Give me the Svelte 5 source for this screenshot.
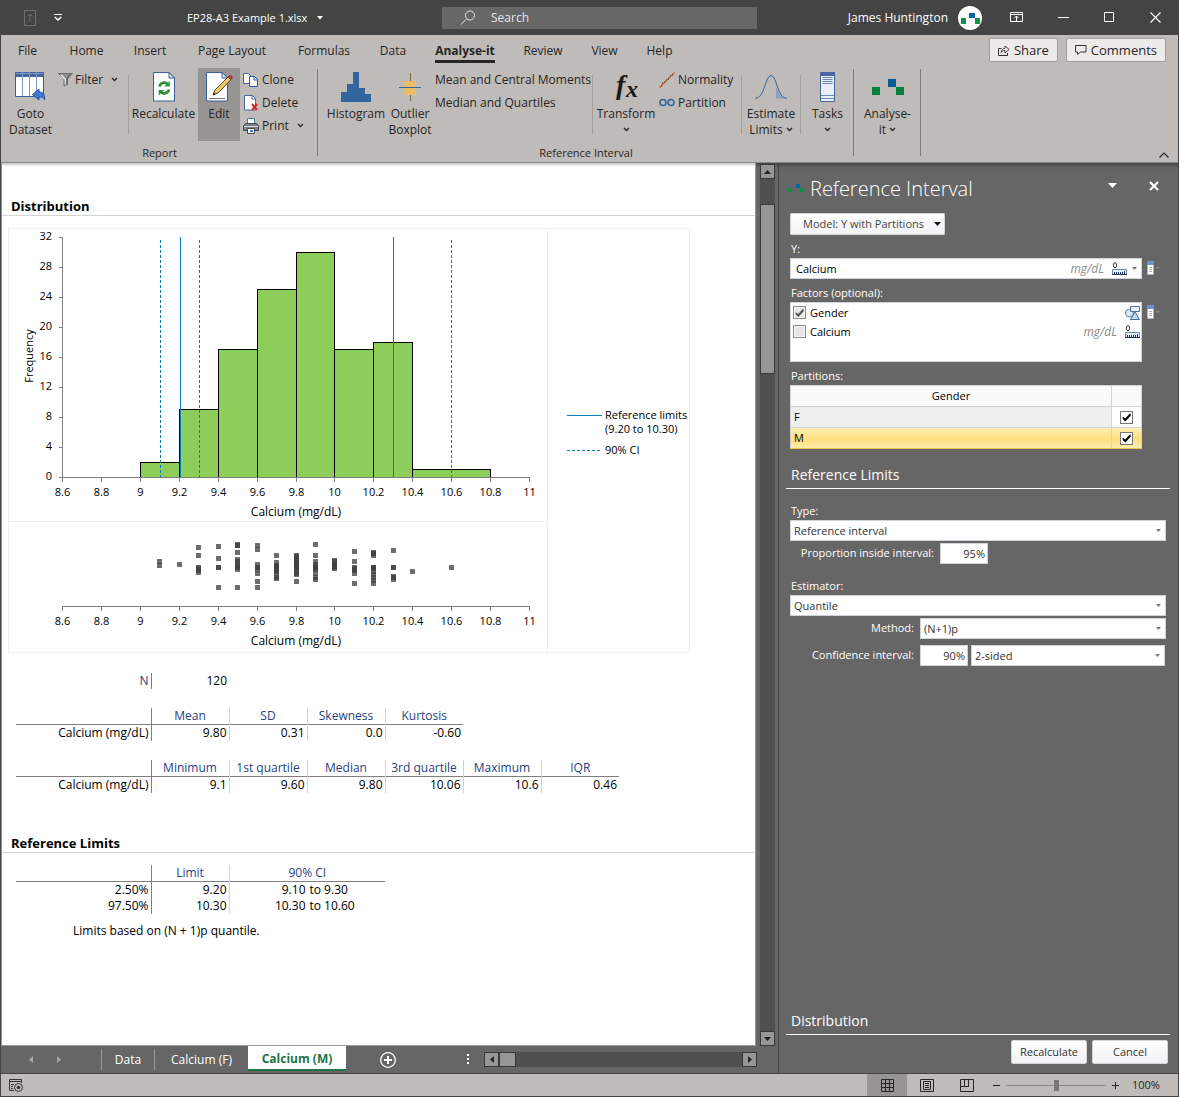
<script>
  const tabs = ['File', 'Home', 'Insert', 'Page Layout', 'Formulas', 'Data', 'Analyse-it', 'Review', 'View', 'Help'];

  const x0 = 54;
  const xTicks = ['8.6', '8.8', '9', '9.2', '9.4', '9.6', '9.8', '10', '10.2', '10.4', '10.6', '10.8', '11'];
  const yTicks = [0, 4, 8, 12, 16, 20, 24, 28, 32];
  const xAt = (v) => Math.round(x0 + ((v - 8.6) / 2.4) * 467 + 0.01) + 0.5;
  const yAt = (v) => Math.floor(249 - v * 7.5) + 0.5;
  const bars = [[9, 2], [9.2, 9], [9.4, 17], [9.6, 25], [9.8, 30], [10, 17], [10.2, 18]];

  const dots = [
    [9.1, [333, 337]],
    [9.2, [336]],
    [9.3, [319, 327, 339, 340, 342, 344]],
    [9.4, [318, 330, 339, 339, 359]],
    [9.5, [316, 317, 317, 324, 331, 333, 336, 338, 339, 341, 359]],
    [9.6, [317, 321, 336, 339, 339, 341, 345, 353, 359]],
    [9.7, [327, 334, 337, 338, 339, 340, 341, 343, 345, 349, 350]],
    [9.8, [327, 328, 329, 331, 332, 334, 335, 337, 338, 339, 341, 343, 345, 346, 353]],
    [9.9, [316, 327, 333, 336, 338, 339, 340, 341, 345, 349, 351]],
    [10, [332, 333, 335, 336, 338, 339, 340]],
    [10.1, [323, 333, 339, 340, 341, 342, 345, 355]],
    [10.2, [324, 325, 325, 327, 339, 339, 340, 343, 346, 349, 352, 355]],
    [10.3, [322, 339, 339, 348, 349, 351]],
    [10.4, [343]],
    [10.6, [339]]
  ];

  const summaries = [
    { heads: ['Mean', 'SD', 'Skewness', 'Kurtosis'], values: ['9.80', '0.31', '0.0', '-0.60'] },
    {
      heads: ['Minimum', '1st quartile', 'Median', '3rd quartile', 'Maximum', 'IQR'],
      values: ['9.1', '9.60', '9.80', '10.06', '10.6', '0.46']
    }
  ];
</script>

{#snippet chevron()}
  <svg class="chev" width="7" height="5" viewBox="0 0 7 5"><path d="M1 1l2.5 2.5L6 1" fill="none" stroke="#262626" stroke-width="1.3" /></svg>
{/snippet}

{#snippet caret()}
  <svg class="caret" width="5" height="3" viewBox="0 0 5 3"><path d="M0 0h5L2.5 3z" fill="#777" /></svg>
{/snippet}

{#snippet ruler()}
  <svg width="15" height="13" viewBox="0 0 15 13">
    <ellipse cx="3" cy="3.2" rx="1.6" ry="2.600" fill="none" stroke="#333" />
    <path d="M.5 7.500h14v5H.5z" fill="#e8effa" stroke="#6c8bb8" />
    <path d="M0 12.500h15" stroke="#1f355e" />
    <path d="M2.500 10v2M4.500 10v2M6.500 10v2M8.500 10v2M10.500 10v2M12.500 9v3" stroke="#1f355e" />
  </svg>
{/snippet}

{#snippet taskIcon()}
  <svg width="14" height="14" viewBox="0 0 14 14">
    <path d="M.5 1.500h6v12h-6z" fill="#fff" stroke="#9fb4d6" />
    <path d="M0 0h7v4H0z" fill="#6f93d1" />
    <path d="M2 6.500h3M2 8.500h3M2 10.500h3" stroke="#a8b0bb" />
    <path d="M9 6h4l-2 2.500z" fill="#8a8a8a" />
  </svg>
{/snippet}

{#snippet xAxis(y)}
  <path d="M{x0} {y}.5h468" stroke="#7f7f7f" fill="none" />
  {#each xTicks as t, i}
    <path d="M{xAt(8.6 + i * 0.2)} {y}v5" stroke="#7f7f7f" />
    <text x={xAt(8.6 + i * 0.2)} y={y + 19} text-anchor="middle">{t}</text>
  {/each}
  <text x="288" y={y + 39} text-anchor="middle" class="axis">Calcium (mg/dL)</text>
{/snippet}

<div class="app">
  <header class="titlebar">
    <div class="tb-left">
      <button class="bare quick" aria-label="Touch mode">
        <svg width="12" height="16" viewBox="0 0 12 16"><path d="M.5.5h11v15H.5zM6 12V4M3.500 6.500L6 4l2.500 2.500" fill="none" stroke="#6f6f6f" /></svg>
      </button>
      <button class="bare more" aria-label="Customize toolbar">
        <svg width="8" height="7" viewBox="0 0 8 7"><path d="M0 .5h8" stroke="#fff" /><path d="M.8 3L4 6l3.200-3" fill="none" stroke="#fff" stroke-width="1.500" /></svg>
      </button>
      <button class="bare doc">EP28-A3 Example 1.xlsx <svg width="6" height="4" viewBox="0 0 6 4"><path d="M0 0h6L3 3.500z" fill="#fff" /></svg></button>
    </div>
    <label class="search">
      <svg width="16" height="16" viewBox="0 0 16 16"><circle cx="10" cy="5.500" r="4.500" fill="none" stroke="#e6e6e6" /><path d="M6.500 9L1 14.500" stroke="#e6e6e6" /></svg>
      <input type="text" placeholder="Search" aria-label="Search" />
    </label>
    <div class="tb-right">
      <span class="user">James Huntington</span>
      <svg class="avatar" width="24" height="24" viewBox="0 0 24 24"><circle cx="12" cy="12" r="12" fill="#fff" /><path d="M11 7h6v5h-6z" fill="#0068a5" /><path d="M3 12h5v6H3zM17 12h5v6h-5z" fill="#0b9444" /></svg>
      <button class="bare win" aria-label="Ribbon display"><svg width="14" height="11" viewBox="0 0 14 11"><path d="M.5.5h12v9H.5zM.500 2.500h12M6.500 9V4M4.500 6l2-2 2 2" fill="none" stroke="#fff" /></svg></button>
      <button class="bare win" aria-label="Minimize"><svg width="11" height="11" viewBox="0 0 11 11"><path d="M0 5.500h11" stroke="#fff" /></svg></button>
      <button class="bare win" aria-label="Maximize"><svg width="11" height="11" viewBox="0 0 11 11"><path d="M.5.5h9v9h-9z" fill="none" stroke="#fff" /></svg></button>
      <button class="bare win" aria-label="Close"><svg width="11" height="11" viewBox="0 0 11 11"><path d="M.5.5l10 10M10.500.5l-10 10" stroke="#fff" stroke-width="1.200" /></svg></button>
    </div>
  </header>

  <section class="ribbon">
    <div class="tabrow">
      <nav class="tabs">
        {#each tabs as t}
          <button class="bare tab" class:on={t === 'Analyse-it'}><span>{t}</span></button>
        {/each}
      </nav>
      <div class="share">
        <button>
          <svg width="12" height="12" viewBox="0 0 12 12"><path d="M3.500 4.500h-3v7h9V9" fill="none" stroke="#333" /><path d="M3 8.500c.5-3 2-4 4-4.200V2l4.200 3.500L7 9V6.500C5.500 6.500 4 7 3 8.500z" fill="none" stroke="#333" stroke-width=".9" /></svg>Share</button>
        <button>
          <svg width="12" height="12" viewBox="0 0 12 12"><path d="M.5 1.500h10.500v6.500H5.500l-3 2.500V8h-2z" fill="none" stroke="#333" /></svg>Comments</button>
      </div>
    </div>

    <div class="groups">
      <div class="group">
        <div class="items">
          <button class="big w57 goto">
            <svg width="31" height="30" viewBox="0 0 31 30">
              <path d="M.5.5h28v24H.5z" fill="#fff" stroke="#385c96" />
              <path d="M0 0h29v5H0z" fill="#46659e" /><path d="M1 1.500h27" stroke="#7e98c6" />
              <path d="M7.500 0v24M14.500 0v24M21.500 0v24" stroke="#7b9ac9" />
              <path d="M17.500 22.500l6.500-5.500v3c5 0 6 3 5.500 8-1-3-2.500-3-5.500-3v3z" fill="#3f7bd6" stroke="#2456a8" />
            </svg>
            <span>Goto<br />Dataset</span>
          </button>
          <div class="list w70 filter">
            <button class="small"><svg width="16" height="16" viewBox="0 0 16 16"><path d="M.5 1.500h14L9.500 7v5.500L6 14V7z" fill="#8d8d8d" stroke="#6c6c6c" /><path d="M3 3l4.500 4.500v5" fill="none" stroke="#eee" stroke-width="1.500" /><path d="M12 2.500L8.700 6.500V12" fill="none" stroke="#555" /></svg>Filter<span class="push">{@render chevron()}</span></button>
          </div>
          <i class="sep"></i>
          <button class="big w69">
            <svg width="30" height="30" viewBox="0 0 30 30">
              <path d="M4.500.5H20l5.500 5.500v23h-21z" fill="#fafcff" stroke="#3f5f94" /><path d="M20 .5V6h5.500z" fill="#dce7f5" stroke="#3f5f94" />
              <path d="M10.500 14.500c.8-4 6-5 8-2.500M20 17.500c-.8 4-6 5-8 2.500" fill="none" stroke="#2b8f2b" stroke-width="2.600" />
              <path d="M20.800 9v5.500h-5.500zM9.700 23.500V18h5.500z" fill="#2b9a2b" />
            </svg>
            <span>Recalculate</span>
          </button>
          <button class="big w42 pressed">
            <svg width="30" height="30" viewBox="0 0 30 30">
              <path d="M2.500.5H18l5.500 5.500v23h-21z" fill="#fafcff" stroke="#3f5f94" /><path d="M18 .5V6h5.500z" fill="#dce7f5" stroke="#3f5f94" />
              <path d="M5 26.500h16" stroke="#777" />
              <path d="M9 23l2-5L24 5l3 2.500L14 21z" fill="#f3cb62" stroke="#3f3320" stroke-width=".9" />
              <path d="M24 5l1.500-1.500c2-.5 3 1 2.500 2.800L27 7.500z" fill="#d9373a" stroke="#7b2226" stroke-width=".6" />
              <path d="M9 23l1-2.500 1.500 1.500z" fill="#222" />
            </svg>
            <span>Edit</span>
          </button>
          <div class="list w78 docs">
            <button class="small"><svg width="16" height="16" viewBox="0 0 16 16"><path d="M.5 1.500h5l3 3v7h-8z" fill="#fff" stroke="#3c66ad" /><path d="M6.500 4.500h5l3 3v7h-8z" fill="#fff" stroke="#2459ad" /><path d="M11 4.500V8h3.500" fill="none" stroke="#2459ad" /></svg>Clone</button>
            <button class="small"><svg width="16" height="16" viewBox="0 0 16 16"><path d="M1.500.5h8l3 3v11.500h-11z" fill="#fff" stroke="#4a689c" /><path d="M9 .5V4h3.500" fill="none" stroke="#4a689c" /><path d="M9 9l5 6M14 9l-5 6" stroke="#cf2a1b" stroke-width="2" /></svg>Delete</button>
            <button class="small"><svg width="16" height="16" viewBox="0 0 16 16"><path d="M4.500.5h7v6h-7z" fill="#fff" stroke="#56729e" /><path d="M2.500 5.500h11l2 2.500v4.500H.5V8z" fill="#7f8288" stroke="#44474d" /><path d="M1 8.500h14" stroke="#d5d7da" /><path d="M4.500 10.500h7v5h-7z" fill="#fff" stroke="#44474d" /><path d="M7 12h3v2H7z" fill="#2f7fd0" /></svg>Print<span class="push">{@render chevron()}</span></button>
          </div>
        </div>
        <div class="caption">Report</div>
      </div>

      <div class="group">
        <div class="items">
          <button class="big w76">
            <svg width="30" height="30" viewBox="0 0 30 30" shape-rendering="crispEdges"><path d="M0 30V20h6v-8h6V0h6v16h6v6h6v8z" fill="#31659c" /></svg>
            <span>Histogram</span>
          </button>
          <button class="big w32">
            <svg width="22" height="30" viewBox="0 0 22 30"><path d="M11.500 1v28" stroke="#7d684a" /><path d="M5 9h12v14H5z" fill="#e9bd69" /><path d="M0 15.500h22" stroke="#31659c" /></svg>
            <span>Outlier<br />Boxplot</span>
          </button>
          <div class="list w166 plain">
            <button class="small">Mean and Central Moments</button>
            <button class="small">Median and Quartiles</button>
          </div>
          <i class="sep"></i>
          <button class="big w66">
            <svg class="fx" width="30" height="30" viewBox="0 0 30 30"><text x="5" y="22">f</text><text x="15" y="25" class="sub">x</text></svg>
            <span>Transform<br />{@render chevron()}</span>
          </button>
          <div class="list w82">
            <button class="small"><svg width="16" height="16" viewBox="0 0 16 16"><path d="M.5 15.500L15.500.5" stroke="#e2552f" stroke-width="1.200" /><path d="M3 11h1M5 10h1M7 8h1M9 7h1M11 4h1M13 3h1M2 14h1" stroke="#333" stroke-width="1.200" /></svg>Normality</button>
            <button class="small"><svg width="16" height="16" viewBox="0 0 16 16"><circle cx="4" cy="7.500" r="3" fill="none" stroke="#31659c" stroke-width="1.600" /><circle cx="12" cy="7.500" r="3" fill="none" stroke="#31659c" stroke-width="1.600" /></svg>Partition</button>
          </div>
          <i class="sep"></i>
          <button class="big w58">
            <svg width="32" height="30" viewBox="0 0 32 30"><path d="M21 15c3 6 5 11 10 11.500H21z" fill="#8ba3bd" /><path d="M0 26.500c10 0 10-23 16-23s6 23 16 23" fill="none" stroke="#31659c" /></svg>
            <span>Estimate<br />Limits {@render chevron()}</span>
          </button>
          <i class="sep"></i>
          <button class="big w53">
            <svg width="16" height="30" viewBox="0 0 16 30"><path d="M.5.5h14v29H.5z" fill="#eaf0f9" stroke="#45659c" /><path d="M0 0h15v4H0z" fill="#4b68a4" /><path d="M2.500 5.500h10M2.500 7.500h10M2.500 9.500h10M2.500 11.500h10M1 23.500h13M1 26.500h13" stroke="#6d87b4" /></svg>
            <span>Tasks<br />{@render chevron()}</span>
          </button>
        </div>
        <div class="caption">Reference Interval</div>
      </div>

      <div class="group">
        <div class="items">
          <button class="big w67">
            <svg width="32" height="30" viewBox="0 0 32 30" shape-rendering="crispEdges"><path d="M16 7h8v8h-8z" fill="#005b96" /><path d="M0 15h8v8H0zM24 15h8v8h-8z" fill="#007f3b" /></svg>
            <span>Analyse-<br />it {@render chevron()}</span>
          </button>
        </div>
      </div>
      <button class="bare collapse" aria-label="Collapse ribbon"><svg width="10" height="6" viewBox="0 0 10 6"><path d="M.5 5.500L5 1l4.500 4.500" fill="none" stroke="#222" stroke-width="1.200" /></svg></button>
    </div>
  </section>

  <main class="work">
    <div class="book">
      <div class="sheetrow">
        <article class="sheet">
          <h2>Distribution</h2>
          <svg class="chart" width="682" height="426" viewBox="0 0 682 426">
            <path d="M.5.5h681v424H.5zM539.500.5v424M.5 293.500h539" fill="none" stroke="#efefef" />
            <g shape-rendering="crispEdges">
              {#each bars as [v, n]}
                <rect x={xAt(v)} y={yAt(n)} width={xAt(v + 0.2) - xAt(v)} height={249.5 - yAt(n)} fill="#8dce5b" stroke="#000" />
              {/each}
              <rect x={xAt(10.4)} y={yAt(1)} width={xAt(10.8) - xAt(10.4)} height={249.5 - yAt(1)} fill="#8dce5b" stroke="#000" />
            </g>
            <path d="M54.500 9v241" stroke="#7f7f7f" />
            {#each yTicks as t}
              <path d="M51 {249.5 - t * 7.5}h4" stroke="#7f7f7f" />
              <text x="44" y={252 - t * 7.5} text-anchor="end">{t}</text>
            {/each}
            <text transform="translate(25 128) rotate(-90)" text-anchor="middle">Frequency</text>
            {@render xAxis(249)}
            <g stroke="#0a7fc0" fill="none">
              <path d="M172.500 9v240M385.500 9v240" />
              <path d="M152.500 12v237M191.500 12v237M443.500 12v237" stroke-dasharray="3 2" />
              <path d="M559 187.500h35" /><path d="M559 222.500h35" stroke-dasharray="3 2" />
            </g>
            <text x="597" y="191">Reference limits</text>
            <text x="597" y="205">(9.20 to 10.30)</text>
            <text x="597" y="226">90% CI</text>
            {@render xAxis(378)}
            <g fill="#404040" fill-opacity=".76" shape-rendering="crispEdges">
              {#each dots as [v, ys]}
                {#each ys as y}
                  <rect x={xAt(v) - 2.5} y={y - 2} width="5" height="5" />
                {/each}
              {/each}
            </g>
          </svg>

          <table class="stat">
            <tbody><tr><th class="row blue" scope="row">N</th><td>120</td></tr></tbody>
          </table>
          {#each summaries as s}
            <table class="stat summary">
              <thead><tr><td class="row"></td>{#each s.heads as h}<th scope="col">{h}</th>{/each}</tr></thead>
              <tbody><tr><th class="row" scope="row">Calcium (mg/dL)</th>{#each s.values as v}<td>{v}</td>{/each}</tr></tbody>
            </table>
          {/each}

          <h2 class="second">Reference Limits</h2>
          <table class="stat limits">
            <thead><tr><td class="row"></td><th scope="col">Limit</th><th class="ci" scope="col">90% CI</th></tr></thead>
            <tbody>
              <tr><th class="row" scope="row">2.50%</th><td>9.20</td><td class="ci"><span class="lo">9.10</span><span>to 9.30</span></td></tr>
              <tr><th class="row" scope="row">97.50%</th><td>10.30</td><td class="ci"><span class="lo">10.30</span><span>to 10.60</span></td></tr>
            </tbody>
          </table>
          <p class="note">Limits based on (N + 1)p quantile.</p>
        </article>
        <div class="vbar">
          <button class="sb" aria-label="Scroll up"><svg width="7" height="4" viewBox="0 0 7 4"><path d="M0 4h7L3.500 0z" fill="#222" /></svg></button>
          <div class="vthumb"></div>
          <button class="sb" aria-label="Scroll down"><svg width="7" height="4" viewBox="0 0 7 4"><path d="M0 0h7L3.500 4z" fill="#222" /></svg></button>
        </div>
      </div>
      <div class="sheettabs">
        <button class="bare arrow" aria-label="Previous sheet"><svg width="4" height="7" viewBox="0 0 4 7"><path d="M4 0v7L0 3.500z" fill="#a8a8a8" /></svg></button>
        <button class="bare arrow" aria-label="Next sheet"><svg width="4" height="7" viewBox="0 0 4 7"><path d="M0 0v7l4-3.500z" fill="#a8a8a8" /></svg></button>
        <div class="pages">
          <button class="bare page data">Data</button>
          <button class="bare page">Calcium (F)</button>
          <button class="bare page on">Calcium (M)</button>
        </div>
        <button class="bare add" aria-label="New sheet"><svg width="16" height="16" viewBox="0 0 16 16"><circle cx="8" cy="8" r="7.300" fill="none" stroke="#fff" stroke-width="1.300" /><path d="M8 4v8M4 8h8" stroke="#fff" stroke-width="2" /></svg></button>
        <svg class="grip" width="2" height="11" viewBox="0 0 2 11"><path d="M0 0h2v2H0zM0 4h2v2H0zM0 8h2v2H0z" fill="#fff" /></svg>
        <div class="hbar">
          <button class="sb" aria-label="Scroll left"><svg width="4" height="7" viewBox="0 0 4 7"><path d="M4 0v7L0 3.500z" fill="#222" /></svg></button>
          <div class="hthumb"></div>
          <button class="sb" aria-label="Scroll right"><svg width="4" height="7" viewBox="0 0 4 7"><path d="M0 0v7l4-3.500z" fill="#222" /></svg></button>
        </div>
      </div>
    </div>

    <aside class="pane">
      <header class="ptitle">
        <svg width="16" height="8" viewBox="0 0 16 8"><path d="M8 0h4v4H8z" fill="#0068a5" /><path d="M0 4h4v4H0zM12 4h4v4h-4z" fill="#0b9444" /></svg>
        <h1>Reference Interval</h1>
        <button class="bare pmenu" aria-label="Task pane options"><svg width="9" height="5" viewBox="0 0 9 5"><path d="M0 0h9L4.500 5z" fill="#fff" /></svg></button>
        <button class="bare pclose" aria-label="Close pane"><svg width="10" height="10" viewBox="0 0 10 10"><path d="M1 1l8 8M9 1L1 9" stroke="#fff" stroke-width="2.200" /></svg></button>
      </header>

      <div class="vars">
        <button class="model">Model: Y with Partitions <svg width="7" height="4" viewBox="0 0 7 4"><path d="M0 0h7L3.500 4z" fill="#111" /></svg></button>

        <label class="lab" for="y">Y:</label>
        <div class="line">
          <div class="ybox">
            <select id="y"><option>Calcium</option></select>
            <em>mg/dL</em>{@render ruler()}{@render caret()}
          </div>
          <button class="bare" aria-label="Y tasks">{@render taskIcon()}</button>
        </div>

        <div class="lab">Factors (optional):</div>
        <div class="line">
          <div class="factors">
            <div class="factor">
              <input id="fg" type="checkbox" class="grey" checked /><label for="fg">Gender</label>
              <svg width="15" height="14" viewBox="0 0 15 14"><circle cx="4.500" cy="7" r="4" fill="#dce8f5" stroke="#5a80b0" /><path d="M5.500.5h9v5h-9z" fill="#eef4fb" stroke="#4a6f9f" /><path d="M10 6l4.500 7.500h-9z" fill="#c5d9ee" stroke="#4a6f9f" /></svg>
            </div>
            <div class="factor">
              <input id="fc" type="checkbox" class="grey" /><label for="fc">Calcium</label>
              <em>mg/dL</em>{@render ruler()}
            </div>
          </div>
          <button class="bare" aria-label="Factor tasks">{@render taskIcon()}</button>
        </div>

        <div class="lab">Partitions:</div>
        <table class="parts">
          <thead><tr><th scope="col">Gender</th><td class="tick"></td></tr></thead>
          <tbody>
            <tr class="alt"><td>F</td><td class="tick"><input type="checkbox" checked aria-label="F" /></td></tr>
            <tr class="sel"><td>M</td><td class="tick"><input type="checkbox" checked aria-label="M" /></td></tr>
          </tbody>
        </table>
      </div>

      <h3>Reference Limits</h3>
      <div class="form">
        <label class="lab" for="type">Type:</label>
        <div class="drop"><select id="type"><option>Reference interval</option></select>{@render caret()}</div>
        <div class="frow">
          <label class="prop" for="prop">Proportion inside interval:</label>
          <input id="prop" type="text" value="95%" />
        </div>
        <label class="lab est" for="est">Estimator:</label>
        <div class="drop"><select id="est"><option>Quantile</option></select>{@render caret()}</div>
        <div class="frow">
          <label class="side" for="method">Method:</label>
          <div class="drop grow"><select id="method"><option>(N+1)p</option></select>{@render caret()}</div>
        </div>
        <div class="frow conf">
          <label class="side" for="conf">Confidence interval:</label>
          <input id="conf" type="text" value="90%" />
          <div class="drop grow"><select aria-label="Sides"><option>2-sided</option></select>{@render caret()}</div>
        </div>
      </div>

      <div class="foot">
        <h3>Distribution</h3>
        <div class="acts"><button>Recalculate</button><button>Cancel</button></div>
      </div>
    </aside>
  </main>

  <footer class="status">
    <svg class="macro" width="15" height="13" viewBox="0 0 15 13"><path d="M12.500 4V.5H.5v11H5M0 2.500h12.500M2 5.500h3M2 7.500h2M2 9.500h2" fill="none" stroke="#333" /><circle cx="9.500" cy="8.500" r="4" fill="none" stroke="#333" /><circle cx="9.500" cy="8.500" r="1.800" fill="#333" /></svg>
    <div class="views">
      <button class="bare view on" aria-label="Normal"><svg width="13" height="13" viewBox="0 0 13 13"><path d="M.5.5h12v12H.5zM4.500 0v13M8.500 0v13M0 4.500h13M0 8.500h13" fill="none" stroke="#262626" /></svg></button>
      <button class="bare view" aria-label="Page layout"><svg width="14" height="13" viewBox="0 0 14 13"><path d="M.5.5h13v12H.5zM3.500 2.500h7v8h-7zM5 4.500h4M5 6.500h4M5 8.500h4" fill="none" stroke="#262626" /></svg></button>
      <button class="bare view" aria-label="Page break preview"><svg width="14" height="13" viewBox="0 0 14 13"><path d="M.5.5h13v12H.5zM4.500 0v7M8.500 0v7.500M0 7.500h9" fill="none" stroke="#262626" /></svg></button>
    </div>
    <button class="bare zb" aria-label="Zoom out"><svg width="9" height="9" viewBox="0 0 9 9"><path d="M1 4.500h7" stroke="#222" /></svg></button>
    <input class="zoom" type="range" min="0" max="100" value="50" aria-label="Zoom" />
    <button class="bare zb" aria-label="Zoom in"><svg width="9" height="9" viewBox="0 0 9 9"><path d="M1 4.500h7M4.500 1v7" stroke="#222" /></svg></button>
    <span class="pct">100%</span>
  </footer>
</div>

<style>
  :global(body) { background: #444; }
  .app, .app * { box-sizing: border-box; }
  .app {
    display: flex; flex-direction: column; min-height: 100vh;
    border: solid #444; border-width: 0 1px 1px;
    background: #666; color: #262626;
    font: 12px/16px "Open Sans", "Noto Sans", sans-serif;
  }
  button, input, select { font: inherit; color: inherit; margin: 0; }
  button { padding: 0; }
  svg { flex: none; }
  .bare { border: 0; background: none; padding: 0; }
  h1, h2, h3, p { margin: 0; font-weight: 400; }

  .titlebar { display: grid; grid-template-columns: 441fr 315fr 421fr; align-items: center; height: 35px; background: #444; color: #fff; }
  .tb-left { display: flex; align-items: center; padding-left: 23px; }
  .tb-left svg { display: block; }
  .more { margin-left: 18px; }
  .doc { display: flex; align-items: center; gap: 10px; margin-left: 125px; font-size: 11px; }
  .search { display: flex; align-items: center; gap: 15px; height: 22px; padding-left: 18px; background: #676767; }
  .search input { flex: 1; min-width: 0; border: 0; padding: 0; background: none; outline: 0; }
  .search input::placeholder { color: #e6e6e6; opacity: 1; }
  .tb-right { display: flex; align-items: center; justify-content: flex-end; }
  .user { margin-right: 10px; }
  .avatar { margin-right: 12px; }
  .win { display: flex; align-items: center; justify-content: center; width: 46px; height: 34px; }

  .ribbon { background: #bfbbb8; border-bottom: 1px solid #8a8886; }
  .tabrow { display: flex; justify-content: space-between; height: 31px; }
  .tabs { display: grid; grid-template-columns: 53px 65px 62px 102px 82px 56px 88px 68px 55px 55px; }
  .tab { display: flex; justify-content: center; }
  .tab span { padding: 7px 0 1px; line-height: 17px; border-bottom: 3px solid transparent; height: 28px; white-space: nowrap; }
  .tab.on { font-weight: 700; }
  .tab.on span { border-color: #262626; }
  .share { display: flex; gap: 8px; padding: 3px 12px 4px 0; }
  .share button { display: flex; align-items: center; gap: 4px; padding: 0 8px; border: 1px solid #9f9c99; border-radius: 2px; background: #edebe9; font-size: 13px; }
  .share svg { display: block; }
  .groups { display: flex; height: 96px; padding-top: 2px; }
  .group { display: flex; flex-direction: column; position: relative; }
  .group::after { content: ""; position: absolute; right: 0; top: 1px; bottom: 6px; width: 1px; background: #7d7a78; }
  .items { display: flex; height: 73px; }
  .caption { padding-top: 4px; text-align: center; font-size: 11px; }
  .big { display: flex; flex-direction: column; align-items: center; gap: 4px; padding: 4px 0 0; border: 0; background: none; white-space: nowrap; }
  .big span { display: block; }
  .big.goto { padding-left: 2px; }
  .pressed { background: #979593; }
  .chev { vertical-align: 2px; }
  .list { display: flex; flex-direction: column; }
  .small { display: flex; align-items: center; gap: 3px; height: 23px; border: 0; background: none; text-align: left; white-space: nowrap; }
  .push { margin-left: auto; padding-right: 10px; }
  .filter .small { gap: 1px; }
  .docs { padding-left: 3px; }
  .docs .push { padding-right: 14px; }
  .plain { padding-left: 9px; }
  .sep { width: 1px; margin: 7px 0; background: #a19e9b; }
  .w32 { width: 32px; } .w42 { width: 42px; } .w53 { width: 53px; } .w57 { width: 57px; } .w58 { width: 58px; }
  .w66 { width: 66px; } .w67 { width: 67px; } .w69 { width: 69px; } .w70 { width: 70px; } .w76 { width: 76px; }
  .w78 { width: 78px; } .w82 { width: 82px; } .w166 { width: 166px; }
  .fx { overflow: visible; font: italic 700 28px "Liberation Serif", serif; fill: #1a1a1a; }
  .fx .sub { font-size: 24px; }
  .collapse { margin: auto 9px 4px auto; line-height: 8px; }

  .work { display: flex; flex: 1; box-shadow: inset 0 6px 5px -5px #333; }
  .book { flex: 1; min-width: 0; display: flex; flex-direction: column; }
  .sheetrow { display: flex; flex: 1; }
  .sheet { flex: 1; min-width: 0; overflow: hidden; border: solid #999; border-width: 0 1px 1px; background: #fff; color: #000; padding-top: 33px; box-shadow: inset 0 3px 2px -1px #ccc; }
  h2 { padding: 1px 9px 0; font-weight: 700; font-size: 13px; line-height: 18px; border-bottom: 1px solid #d4d4d4; }
  .chart { display: block; margin: 12px 0 0 6px; font-size: 11px; }
  .axis { font-size: 12px; }
  .stat { border-collapse: collapse; table-layout: fixed; margin: 19px 0 0 14px; width: max-content; }
  .stat th, .stat td { padding: 0 2px; width: 78px; height: 16px; line-height: 16px; font-weight: 400; text-align: right; border-right: 1px solid #d4d4d4; white-space: nowrap; }
  .stat .row { width: 135px; border-right-color: #7f7f7f; }
  .stat tr > :last-child { border-right: 0; }
  .stat thead th { text-align: center; color: #1f3f7f; }
  .stat thead tr { border-bottom: 1px solid #7f7f7f; }
  .stat .blue { color: #1f3f7f; }
  .stat .ci { width: 156px; text-align: left; }
  .stat thead .ci { text-align: center; }
  .stat.summary { margin-top: 19px; }
  .lo { display: inline-block; width: 74px; margin-right: 4px; text-align: right; }
  .second { margin-top: 40px; }
  .stat.limits { margin-top: 12px; }
  .note { margin: 9px 0 0 71px; }

  .vbar { display: flex; flex-direction: column; width: 15px; margin: 1px 3px 0 4px; background: #505050; }
  .sb { display: flex; align-items: center; justify-content: center; width: 15px; height: 15px; border: 1px solid #383838; background: #969696; flex: none; }
  .vthumb { height: 170px; margin: 25px 0 auto; border: 1px solid #383838; background: #969696; }
  .sheettabs { display: flex; align-items: center; height: 27px; }
  .arrow { margin-left: 28px; width: 4px; display: flex; }
  .arrow + .arrow { margin-left: 24px; }
  .pages { display: flex; align-self: stretch; margin-left: 40px; color: #fff; }
  .page { width: 93px; margin: 3px 0; }
  .page.data { width: 54px; border: solid #999; border-width: 0 1px; }
  .page.on { width: 98px; margin: 0 0 2px; padding-top: 3px; background: #fff; color: #217346; border-bottom: 2px solid #217346; font-weight: 700; }
  .add { display: flex; margin-left: 34px; }
  .grip { margin-left: 71px; }
  .hbar { display: flex; flex: 1; margin: 0 21px 0 15px; background: #505050; }
  .hthumb { width: 17px; margin: 0 auto 0 0; border: 1px solid #383838; background: #969696; }

  .pane { width: 400px; flex: none; display: flex; flex-direction: column; border-left: 1px solid #444; color: #fff; font-size: 11px; }
  .ptitle { display: flex; align-items: center; padding: 10px 19px 0 9px; height: 40px; }
  h1 { margin: 2px auto 0 6px; font-weight: 300; font-size: 20px; line-height: 30px; }
  .pmenu { margin-right: 32px; line-height: 0; }
  .pclose { line-height: 0; }
  .ptitle button { margin-bottom: 5px; }
  .vars { padding: 10px 0 0 11px; }
  .model { display: flex; align-items: center; gap: 10px; height: 22px; padding: 0 3px 0 12px; border: 1px solid #d5d5d5; border-radius: 1px; background: linear-gradient(#fff, #f1f2f4); color: #444; }
  .lab { display: block; padding: 5px 0 1px 1px; line-height: 17px; }
  .line { display: flex; gap: 5px; margin-right: 8px; align-items: flex-start; }
  .line .bare { margin-top: 3px; line-height: 0; }
  .ybox, .factors { width: 352px; border: 1px solid #d0d4d9; background: #fff; color: #000; }
  .ybox { display: flex; align-items: center; height: 21px; padding: 0 4px 0 5px; }
  .ybox select { flex: 1; }
  .ybox .caret { margin-left: 5px; }
  select { appearance: none; border: 0; padding: 0; background: none; outline: 0; }
  em { color: #8a8a8a; margin-right: 8px; font-size: 12px; }
  .factors { height: 60px; padding: 0 1px 0 2px; }
  .factor { display: flex; align-items: center; height: 19px; }
  .factor label { margin: 0 auto 0 4px; }
  input[type="checkbox"] { appearance: none; display: grid; place-items: center; width: 13px; height: 13px; border: 1px solid #777; background: #fff; }
  input[type="checkbox"]:checked::after { content: ""; width: 9px; height: 9px; background: #000; clip-path: polygon(8% 45%, 35% 68%, 90% 8%, 100% 30%, 38% 100%, 8% 72%); }
  input.grey { border-color: #8c8c8c; background: #e6e6e6; box-shadow: inset 0 0 0 1px #f8f8f8; }
  input.grey:checked::after { background: #555; }
  .parts { width: 352px; border-collapse: collapse; color: #000; }
  .parts th, .parts td { height: 21px; padding: 0 3px; border: 1px solid #d0d3d8; font-weight: 400; line-height: 16px; background: #fafafa; }
  .parts .alt td:first-child { background: #efefef; }
  .parts .tick { width: 30px; background: #fff; padding: 0; }
  .parts thead .tick { background: #fafafa; }
  .tick input { margin: 0 auto; }
  .parts .sel td { border-top-color: #f0c64a; border-bottom-color: #f0c64a; background: linear-gradient(#ffefb5, #fddf7e 55%, #ffeeae); }

  h3 { margin: 16px 8px 0 7px; padding: 0 5px 3px; font-size: 14px; line-height: 20px; border-bottom: 1px solid #fff; }
  .form { padding: 7px 12px 0 11px; }
  .form .lab { padding-top: 6px; }
  .drop { display: grid; align-items: center; height: 21px; border: 1px solid #d0d4d9; background: #fff; color: #333; }
  .drop > :global(*) { grid-area: 1 / 1; }
  .drop select { width: 100%; padding-left: 3px; }
  .drop .caret { justify-self: end; margin-right: 4px; }
  .frow { display: flex; align-items: center; gap: 3px; margin-top: 2px; }
  .frow input { width: 48px; height: 21px; border: 1px solid #d0d4d9; padding: 0 2px; text-align: right; background: #fff; color: #333; }
  .prop { width: 147px; padding: 0 3px 2px 0; text-align: right; white-space: nowrap; }
  .side { width: 127px; padding: 0 3px 1px 0; text-align: right; white-space: nowrap; }
  .form .est { padding-top: 13px; }
  .grow { flex: 1; }
  .conf { margin-top: 6px; margin-right: 1px; }
  .foot { margin-top: auto; padding-bottom: 9px; }
  .acts { display: flex; justify-content: flex-end; gap: 5px; padding: 5px 10px 0 0; }
  .acts button { width: 76px; height: 24px; border: 1px solid #d5d5d5; border-radius: 2px; background: linear-gradient(#fff, #f1f2f4); color: #333; }

  .status { display: flex; align-items: center; height: 23px; border-top: 1px solid #444; background: #bfbbb8; }
  .macro { margin-left: 8px; }
  .views { display: flex; align-self: stretch; margin-left: auto; }
  .view { display: grid; place-items: center; width: 40px; }
  .view.on { background: #979593; }
  .zb { display: flex; margin: 0 5px; }
  .zoom { appearance: none; width: 100px; height: 12px; padding: 0; background: linear-gradient(#8a8886, #8a8886) center / 100% 1px no-repeat; }
  .zoom::-webkit-slider-thumb { appearance: none; width: 5px; height: 11px; background: #777; }
  .pct { width: 32px; margin: 0 14px 0 7px; font-size: 11px; }
</style>
